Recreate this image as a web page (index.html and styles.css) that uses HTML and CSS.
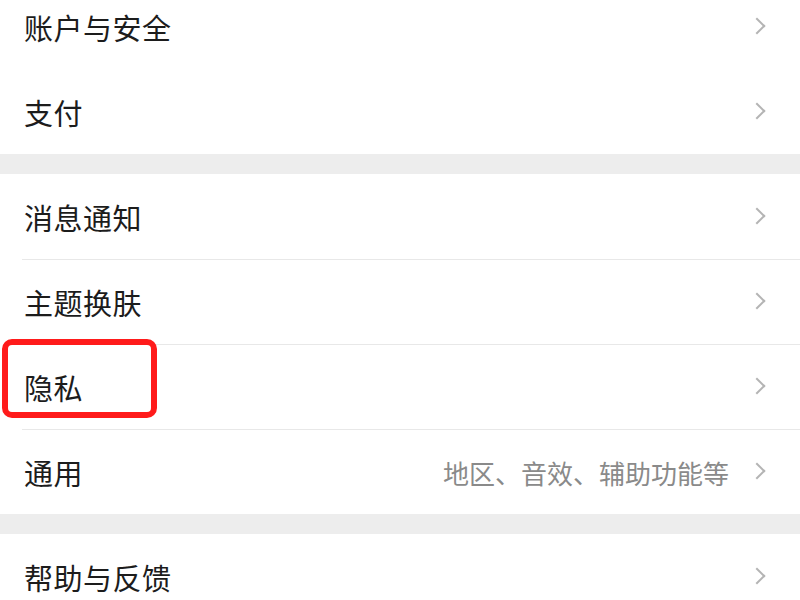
FILE: index.html
```html
<!DOCTYPE html>
<html lang="zh-CN">
<head>
  <meta charset="UTF-8" />
  <meta name="viewport" content="width=device-width, initial-scale=1.0"/>
  <title>设置</title>
  <link rel="stylesheet" href="styles.css">
</head>
<body>
  <div class="settings">
    <div class="group group-first">
      <div class="item"><div class="item-body"><span class="label">账户与安全</span><span class="arrow"></span></div></div>
      <div class="item item-plain"><div class="item-body"><span class="label">支付</span><span class="arrow"></span></div></div>
    </div>

    <div class="group">
      <div class="item"><div class="item-body"><span class="label">消息通知</span><span class="arrow"></span></div></div>
      <div class="item"><div class="item-body"><span class="label">主题换肤</span><span class="arrow"></span></div></div>
      <div class="item item-marked">
        <div class="item-body"><span class="label">隐私</span><span class="arrow"></span></div>
        <div class="mark"></div>
      </div>
      <div class="item"><div class="item-body"><span class="label">通用</span><span class="hint">地区、音效、辅助功能等</span><span class="arrow"></span></div></div>
    </div>

    <div class="group group-last">
      <div class="item"><div class="item-body"><span class="label">帮助与反馈</span><span class="arrow"></span></div></div>
    </div>
  </div>
</body>
</html>
```

FILE: styles.css
```css
body {
  margin: 0;
  background-color: #ededed;
  font-family: "Noto Sans CJK SC", "Noto Sans", sans-serif;
  color: #1c1c1c;
  overflow: hidden;
}
.settings {
  margin-top: -16px;
}
.group {
  background: #fff;
  margin-top: 20px;
}
.group-first {
  margin-top: 0;
}
.group-last {
  margin-top: 20px;
}
.item {
  position: relative;
  padding-left: 22px;
}
.item-body {
  box-sizing: border-box;
  height: 85px;
  display: flex;
  align-items: center;
  padding: 0 33px 0 2px;
  border-top: 1px solid #e8e8e8;
}
.item:first-child .item-body,
.item-plain .item-body {
  border-top-color: transparent;
}
.label {
  font-size: 29px;
  flex: 1;
  letter-spacing: 0.5px;
}
.hint {
  font-size: 26px;
  color: #8a8a8a;
  margin-right: 26px;
}
.arrow {
  width: 12px;
  height: 20px;
  display: block;
  position: relative;
}
.arrow::before {
  content: "";
  position: absolute;
  left: -4px;
  top: 3px;
  width: 12px;
  height: 12px;
  border-top: 2px solid #b4b4b4;
  border-right: 2px solid #b4b4b4;
  transform: rotate(45deg);
  transform-origin: center;
  box-sizing: border-box;
}
.mark {
  position: absolute;
  left: 2px;
  top: -5px;
  width: 155px;
  height: 79px;
  box-sizing: border-box;
  border: 6px solid #ff1b1b;
  border-radius: 10px;
}
```
